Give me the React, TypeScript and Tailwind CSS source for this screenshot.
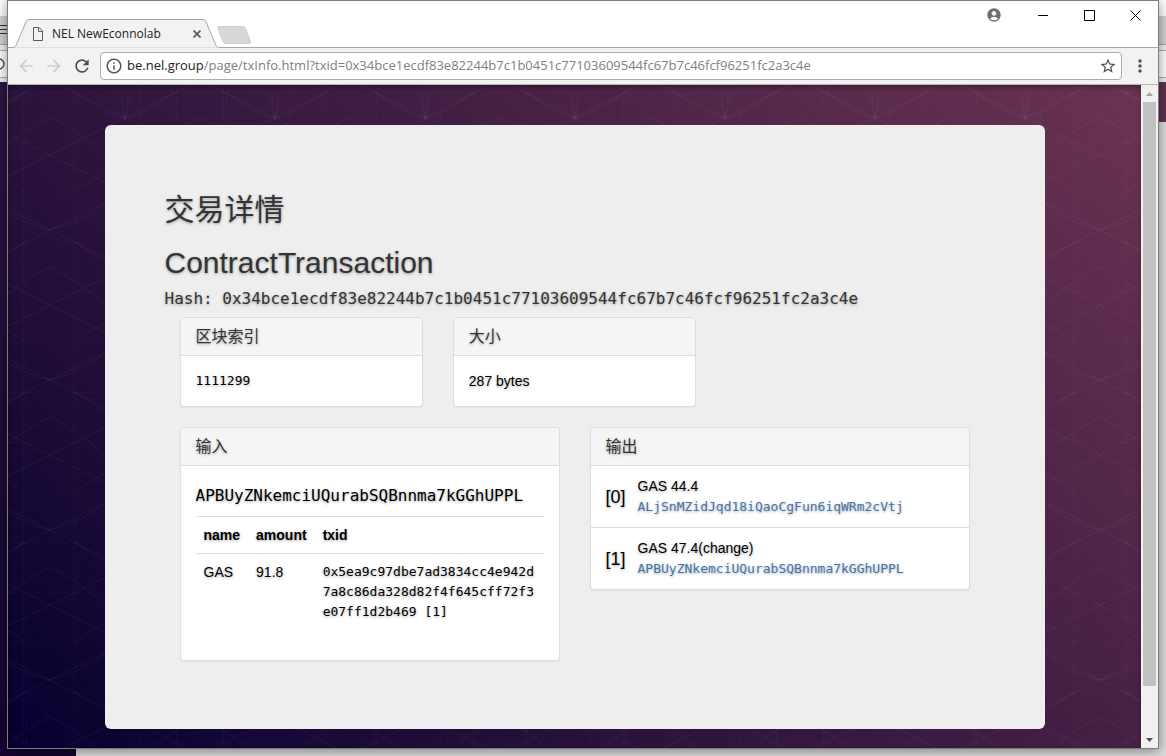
import type { ReactNode } from "react";
import {
  MdAccountCircle,
  MdArrowBack,
  MdArrowForward,
  MdInfoOutline,
  MdMoreVert,
  MdRefresh,
  MdStarBorder,
} from "react-icons/md";

const HASH = "0x34bce1ecdf83e82244b7c1b0451c77103609544fc67b7c46fcf96251fc2a3c4e";

const inputs = [
  {
    name: "GAS",
    amount: "91.8",
    txid: "0x5ea9c97dbe7ad3834cc4e942d7a8c86da328d82f4f645cff72f3e07ff1d2b469 [1]",
  },
];

const outputs = [
  { asset: "GAS 44.4", address: "ALjSnMZidJqd18iQaoCgFun6iqWRm2cVtj" },
  { asset: "GAS 47.4(change)", address: "APBUyZNkemciUQurabSQBnnma7kGGhUPPL" },
];

// The window that sits behind the browser, only its edges show.
function Backdrop() {
  return (
    <div className="absolute inset-0 flex flex-col bg-[#dedede]" aria-hidden="true">
      <div className="h-4 bg-white" />
      <div className="flex h-7 items-center bg-[#d2d2d2]">
        <svg className="h-3 w-2" viewBox="0 0 8 12" stroke="#333" strokeWidth="1">
          <path d="M0 1.5h8M0 5.5h8M0 9.5h8" />
        </svg>
      </div>
      <div className="flex h-[38px] items-center border-t border-[#a9a9a9] bg-[#f1f1f1]">
        <div className="flex h-7 w-full items-center border-y border-[#b0b0b0] bg-white">
          <svg className="h-3 w-2" viewBox="0 0 8 12" fill="none" stroke="#555" strokeWidth="1.5">
            <circle cx="-1" cy="6" r="5" />
          </svg>
        </div>
      </div>
      <div className="flex flex-1">
        <div className="w-[76px] bg-linear-to-b from-[#2d1540] to-[#140530]" />
        <div className="flex-1">
          <div className="h-10 bg-[#633050]" />
        </div>
      </div>
    </div>
  );
}

function TitleBar() {
  return (
    <div className="flex h-[47px] justify-between border-b border-[#a6a6a6] bg-white">
      <div className="flex items-end pl-1">
        <div className="relative z-10 -mb-px flex h-[29px] w-[209px] items-center pr-4 pl-6">
          <svg
            className="absolute inset-0 h-full w-full"
            viewBox="0 0 209 29"
            preserveAspectRatio="none"
            fill="#f2f2f2"
            stroke="#a6a6a6"
          >
            <path d="M0 28.5h1q2 0 3-2L14 3q1-2.500 3-2.500h174q2 0 3 2.500l10 23.500q1 2 3 2h2" />
            <path d="M2 29h205" stroke="#f2f2f2" />
          </svg>
          <svg className="relative -ml-1 h-[14px] w-3" viewBox="0 0 12 14" fill="none" stroke="#5a5a5a">
            <path d="M1.500 .5h5.500l3.500 3.500v9.500h-9zM6.500 .5v4h4" />
          </svg>
          <span className="relative ml-2 flex-1 font-['Open_Sans',sans-serif] text-xs text-[#222]">
            NEL NewEconnolab
          </span>
          <button type="button" aria-label="Close tab" className="relative flex h-4 w-4 items-center justify-center">
            <svg className="h-2 w-2" viewBox="0 0 8 8" stroke="#5a5a5a" strokeWidth="1.700">
              <path d="M.5 .5l7 7M7.500 .5l-7 7" />
            </svg>
          </button>
        </div>
        <button type="button" aria-label="New tab" className="mb-[3px] -ml-1">
          <svg className="h-[18px] w-[34px]" viewBox="0 0 34 18" fill="#d8d8d8" stroke="#cdcdcd">
            <path d="M1.500 .5h24q2 0 3 2l5 13q.5 2-1.500 2H9q-2 0-3-2l-5-13q-.5-2 .5-2z" />
          </svg>
        </button>
      </div>
      <div className="flex h-7 items-center">
        <button type="button" aria-label="Account" className="flex w-8 justify-center">
          <MdAccountCircle className="h-4 w-4 text-[#6e6e6e]" />
        </button>
        <button type="button" aria-label="Minimize" className="ml-[10px] flex w-[46px] justify-center">
          <svg className="h-[11px] w-[11px]" viewBox="0 0 11 11" stroke="#000">
            <path d="M0 5.500h10" />
          </svg>
        </button>
        <button type="button" aria-label="Maximize" className="flex w-[46px] justify-center">
          <svg className="h-[11px] w-[11px]" viewBox="0 0 11 11" fill="none" stroke="#000">
            <path d="M.5 .5h10v10h-10z" />
          </svg>
        </button>
        <button type="button" aria-label="Close" className="flex w-[46px] justify-center">
          <svg className="h-[11px] w-[11px]" viewBox="0 0 11 11" stroke="#000">
            <path d="M.5 .5l10 10M10.500 .5l-10 10" />
          </svg>
        </button>
      </div>
    </div>
  );
}

function Toolbar() {
  return (
    <div className="flex h-[37px] items-center border-b border-[#b3b3b3] bg-[#f2f2f2] px-2">
      <button type="button" aria-label="Back" className="flex w-5 justify-center text-[#cdcdcd]">
        <MdArrowBack className="h-5 w-5" />
      </button>
      <button type="button" aria-label="Forward" className="ml-2 flex w-5 justify-center text-[#cdcdcd]">
        <MdArrowForward className="h-5 w-5" />
      </button>
      <button type="button" aria-label="Reload" className="mr-2 ml-2 flex w-5 justify-center text-[#505050]">
        <MdRefresh className="h-5 w-5" />
      </button>
      <div className="flex h-7 flex-1 items-center rounded-sm border border-[#ababab] bg-white px-1 font-['Open_Sans',sans-serif] text-[13px]">
        <button type="button" className="flex items-center text-[#222]">
          <MdInfoOutline className="mr-1 h-[18px] w-[18px] text-[#555]" />
          be.nel.group
        </button>
        <input
          type="text"
          aria-label="Address"
          className="min-w-0 flex-1 text-[#808080] outline-none"
          defaultValue={`/page/txInfo.html?txid=${HASH}`}
        />
        <button type="button" aria-label="Bookmark this page" className="text-[#505050]">
          <MdStarBorder className="h-[18px] w-[18px]" />
        </button>
      </div>
      <button type="button" aria-label="Menu" className="ml-2 flex w-5 justify-center text-[#505050]">
        <MdMoreVert className="h-5 w-5" />
      </button>
    </div>
  );
}

function LinePattern() {
  return (
    <svg className="absolute inset-0 h-full w-full" aria-hidden="true">
      <defs>
        <pattern id="lines" x="42" y="7" width="150" height="150" patternUnits="userSpaceOnUse">
          <g fill="none" stroke="#fff" strokeOpacity="0.04">
            <path d="M23.500 0v150M26.500 0v150M123.500 0v150M126.500 0v150M90.500 0v150" strokeOpacity="0.02" />
            <path d="M0 .5h150M0 50.500h150M0 100.500h150" strokeOpacity="0.015" />
            <path d="M0 -12L150 63M0 63L150 138M0 138L30 153" />
            <path d="M0 63L150 -12M0 138L150 63M120 153L150 138" />
            <path d="M0 25Q50 50 75 88T150 138M150 25Q100 50 75 88T0 138" />
            <path d="M25 0Q60 25 75 25T125 0M25 100Q60 75 75 75T125 100" />
            <path d="M62 -25L75 28L88 -25M69 -25L75 28L81 -25" strokeOpacity="0.03" />
          </g>
        </pattern>
      </defs>
      <rect width="100%" height="100%" fill="url(#lines)" />
    </svg>
  );
}

function ScrollBar() {
  return (
    <div className="flex w-[17px] flex-col items-center bg-[#f1f1f1]">
      <button type="button" aria-label="Scroll up" className="flex h-[17px] w-full items-center justify-center">
        <svg className="h-1 w-[7px]" viewBox="0 0 7 4" fill="#a3a3a3">
          <path d="M0 4L3.500 0L7 4z" />
        </svg>
      </button>
      <div className="w-[13px] flex-[585] bg-[#c1c1c1]" />
      <div className="flex-[45]" />
      <button type="button" aria-label="Scroll down" className="flex h-[17px] w-full items-center justify-center">
        <svg className="h-1 w-[7px]" viewBox="0 0 7 4" fill="#505050">
          <path d="M0 0L3.500 4L7 0z" />
        </svg>
      </button>
    </div>
  );
}

function Panel({ title, children }: { title: string; children: ReactNode }) {
  return (
    <section className="self-start rounded border border-[#ddd] bg-white text-black shadow-xs">
      <h3 className="rounded-t border-b border-[#ddd] bg-[#f5f5f5] px-[15px] py-[10px] text-base leading-[17px] text-[#333]">
        {title}
      </h3>
      {children}
    </section>
  );
}

function TransactionDetails() {
  return (
    <main className="relative mx-auto max-w-[940px] rounded-md bg-[#eee] px-[60px] py-[68px] font-['Liberation_Sans','Noto_Sans_CJK_SC',sans-serif] text-sm leading-5 text-[#333] [text-shadow:0_1px_3px_rgba(0,0,0,0.35)]">
      <h1 className="text-[30px] leading-[34px]">交易详情</h1>
      <h2 className="mt-5 text-[30px] leading-8">ContractTransaction</h2>
      <p className="mt-[10px] mb-2 font-['DejaVu_Sans_Mono',monospace] text-base leading-5 break-all">Hash: {HASH}</p>

      <div className="flex flex-col gap-5 px-[15px]">
        <div className="grid grid-cols-3 gap-[30px]">
          <Panel title="区块索引">
            <p className="p-[15px] font-['DejaVu_Sans_Mono',monospace] text-[13px]">1111299</p>
          </Panel>
          <Panel title="大小">
            <p className="p-[15px]">287 bytes</p>
          </Panel>
        </div>

        <div className="grid grid-cols-2 gap-[30px]">
          <Panel title="输入">
            <div className="px-[15px] pt-5 pb-[30px]">
              <h4 className="mb-[10px] font-['DejaVu_Sans_Mono',monospace] text-base leading-5 break-all">
                APBUyZNkemciUQurabSQBnnma7kGGhUPPL
              </h4>
              <table className="w-full text-left">
                <thead>
                  <tr className="border-y border-[#ddd]">
                    <th className="p-2">name</th>
                    <th className="p-2">amount</th>
                    <th className="p-2">txid</th>
                  </tr>
                </thead>
                <tbody>
                  {inputs.map(i => (
                    <tr key={i.txid} className="align-top">
                      <td className="p-2">{i.name}</td>
                      <td className="p-2">{i.amount}</td>
                      <td className="p-2 font-['DejaVu_Sans_Mono',monospace] text-[13px] break-all">{i.txid}</td>
                    </tr>
                  ))}
                </tbody>
              </table>
            </div>
          </Panel>
          <Panel title="输出">
            <ul className="divide-y divide-[#ddd]">
              {outputs.map((o, i) => (
                <li key={o.address} className="flex items-center gap-3 px-[15px] py-[10px]">
                  <span className="text-lg">[{i}]</span>
                  <div>
                    <p>{o.asset}</p>
                    <a href="#" className="mt-px block font-['DejaVu_Sans_Mono',monospace] text-[13px] text-[#4376a9]">
                      {o.address}
                    </a>
                  </div>
                </li>
              ))}
            </ul>
          </Panel>
        </div>
      </div>
    </main>
  );
}

export default function App() {
  return (
    <div className="relative flex min-h-screen flex-col px-[7px] pb-[7px]">
      <Backdrop />
      <div className="relative flex flex-1 flex-col border border-[#7d7d7d] shadow-[0_2px_12px_rgba(0,0,0,0.45)]">
        <TitleBar />
        <Toolbar />
        <div className="flex flex-1">
          <div className="relative flex-1 bg-[linear-gradient(45deg,#06002f,#6b3352)] pt-10 pb-4 shadow-[inset_0_3px_5px_rgba(0,0,0,0.3)]">
            <LinePattern />
            <TransactionDetails />
          </div>
          <ScrollBar />
        </div>
      </div>
    </div>
  );
}
